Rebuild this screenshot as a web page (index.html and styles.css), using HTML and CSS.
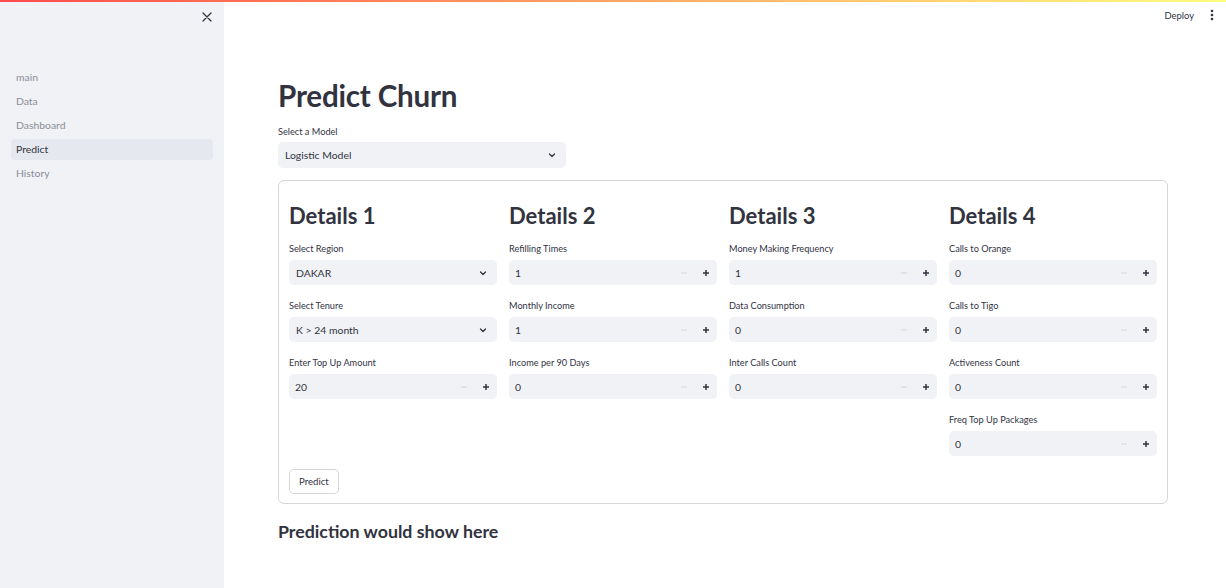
FILE: index.html
```html
<!DOCTYPE html>
<html lang="en">
<head>
<meta charset="utf-8">
<title>Predict Churn</title>
<link rel="stylesheet" href="styles.css">
</head>
<body>
<div class="decoration"></div>
<div class="app">
  <aside class="sidebar">
    <div class="sidebar-head">
      <svg class="close" width="10" height="10" viewBox="0 0 10 10"><path d="M1 1L9 9M9 1L1 9" stroke="#31333f" stroke-width="1.3" stroke-linecap="round"/></svg>
    </div>
    <nav class="nav">
      <a class="nav-item">main</a>
      <a class="nav-item">Data</a>
      <a class="nav-item">Dashboard</a>
      <a class="nav-item active">Predict</a>
      <a class="nav-item">History</a>
    </nav>
  </aside>
  <main class="main">
    <header class="topbar">
      <span class="deploy">Deploy</span>
      <svg class="kebab" width="4" height="12" viewBox="0 0 4 12"><circle cx="2" cy="2" r="1.3" fill="#31333f"/><circle cx="2" cy="6" r="1.3" fill="#31333f"/><circle cx="2" cy="10" r="1.3" fill="#31333f"/></svg>
    </header>
    <section class="content">
      <h1 class="title">Predict Churn</h1>
      <div class="field model-field">
        <label class="label">Select a Model</label>
        <div class="select"><span>Logistic Model</span><svg class="chev" width="10" height="10" viewBox="0 0 10 10"><path d="M2.5 4L5 6.5L7.5 4" fill="none" stroke="#31333f" stroke-width="1.3" stroke-linecap="round" stroke-linejoin="round"/></svg></div>
      </div>
      <form class="form">
        <div class="cols">
          <div class="col">
            <h2 class="h2">Details 1</h2>
            <div class="field"><label class="label">Select Region</label>
              <div class="select"><span>DAKAR</span><svg class="chev" width="10" height="10" viewBox="0 0 10 10"><path d="M2.5 4L5 6.5L7.5 4" fill="none" stroke="#31333f" stroke-width="1.3" stroke-linecap="round" stroke-linejoin="round"/></svg></div></div>
            <div class="field"><label class="label">Select Tenure</label>
              <div class="select"><span>K &gt; 24 month</span><svg class="chev" width="10" height="10" viewBox="0 0 10 10"><path d="M2.5 4L5 6.5L7.5 4" fill="none" stroke="#31333f" stroke-width="1.3" stroke-linecap="round" stroke-linejoin="round"/></svg></div></div>
            <div class="field"><label class="label">Enter Top Up Amount</label>
              <div class="num"><span class="val">20</span><span class="step minus"><svg width="8" height="8" viewBox="0 0 8 8"><path d="M1 4H7" stroke="#d5d7dc" stroke-width="1"/></svg></span><span class="step plus"><svg width="8" height="8" viewBox="0 0 8 8"><path d="M1 4H7M4 1V7" stroke="#31333f" stroke-width="1.5"/></svg></span></div></div>
          </div>
          <div class="col">
            <h2 class="h2">Details 2</h2>
            <div class="field"><label class="label">Refilling Times</label>
              <div class="num"><span class="val">1</span><span class="step minus"><svg width="8" height="8" viewBox="0 0 8 8"><path d="M1 4H7" stroke="#d5d7dc" stroke-width="1"/></svg></span><span class="step plus"><svg width="8" height="8" viewBox="0 0 8 8"><path d="M1 4H7M4 1V7" stroke="#31333f" stroke-width="1.5"/></svg></span></div></div>
            <div class="field"><label class="label">Monthly Income</label>
              <div class="num"><span class="val">1</span><span class="step minus"><svg width="8" height="8" viewBox="0 0 8 8"><path d="M1 4H7" stroke="#d5d7dc" stroke-width="1"/></svg></span><span class="step plus"><svg width="8" height="8" viewBox="0 0 8 8"><path d="M1 4H7M4 1V7" stroke="#31333f" stroke-width="1.5"/></svg></span></div></div>
            <div class="field"><label class="label">Income per 90 Days</label>
              <div class="num"><span class="val">0</span><span class="step minus"><svg width="8" height="8" viewBox="0 0 8 8"><path d="M1 4H7" stroke="#d5d7dc" stroke-width="1"/></svg></span><span class="step plus"><svg width="8" height="8" viewBox="0 0 8 8"><path d="M1 4H7M4 1V7" stroke="#31333f" stroke-width="1.5"/></svg></span></div></div>
          </div>
          <div class="col">
            <h2 class="h2">Details 3</h2>
            <div class="field"><label class="label">Money Making Frequency</label>
              <div class="num"><span class="val">1</span><span class="step minus"><svg width="8" height="8" viewBox="0 0 8 8"><path d="M1 4H7" stroke="#d5d7dc" stroke-width="1"/></svg></span><span class="step plus"><svg width="8" height="8" viewBox="0 0 8 8"><path d="M1 4H7M4 1V7" stroke="#31333f" stroke-width="1.5"/></svg></span></div></div>
            <div class="field"><label class="label">Data Consumption</label>
              <div class="num"><span class="val">0</span><span class="step minus"><svg width="8" height="8" viewBox="0 0 8 8"><path d="M1 4H7" stroke="#d5d7dc" stroke-width="1"/></svg></span><span class="step plus"><svg width="8" height="8" viewBox="0 0 8 8"><path d="M1 4H7M4 1V7" stroke="#31333f" stroke-width="1.5"/></svg></span></div></div>
            <div class="field"><label class="label">Inter Calls Count</label>
              <div class="num"><span class="val">0</span><span class="step minus"><svg width="8" height="8" viewBox="0 0 8 8"><path d="M1 4H7" stroke="#d5d7dc" stroke-width="1"/></svg></span><span class="step plus"><svg width="8" height="8" viewBox="0 0 8 8"><path d="M1 4H7M4 1V7" stroke="#31333f" stroke-width="1.5"/></svg></span></div></div>
          </div>
          <div class="col">
            <h2 class="h2">Details 4</h2>
            <div class="field"><label class="label">Calls to Orange</label>
              <div class="num"><span class="val">0</span><span class="step minus"><svg width="8" height="8" viewBox="0 0 8 8"><path d="M1 4H7" stroke="#d5d7dc" stroke-width="1"/></svg></span><span class="step plus"><svg width="8" height="8" viewBox="0 0 8 8"><path d="M1 4H7M4 1V7" stroke="#31333f" stroke-width="1.5"/></svg></span></div></div>
            <div class="field"><label class="label">Calls to Tigo</label>
              <div class="num"><span class="val">0</span><span class="step minus"><svg width="8" height="8" viewBox="0 0 8 8"><path d="M1 4H7" stroke="#d5d7dc" stroke-width="1"/></svg></span><span class="step plus"><svg width="8" height="8" viewBox="0 0 8 8"><path d="M1 4H7M4 1V7" stroke="#31333f" stroke-width="1.5"/></svg></span></div></div>
            <div class="field"><label class="label">Activeness Count</label>
              <div class="num"><span class="val">0</span><span class="step minus"><svg width="8" height="8" viewBox="0 0 8 8"><path d="M1 4H7" stroke="#d5d7dc" stroke-width="1"/></svg></span><span class="step plus"><svg width="8" height="8" viewBox="0 0 8 8"><path d="M1 4H7M4 1V7" stroke="#31333f" stroke-width="1.5"/></svg></span></div></div>
            <div class="field"><label class="label">Freq Top Up Packages</label>
              <div class="num"><span class="val">0</span><span class="step minus"><svg width="8" height="8" viewBox="0 0 8 8"><path d="M1 4H7" stroke="#d5d7dc" stroke-width="1"/></svg></span><span class="step plus"><svg width="8" height="8" viewBox="0 0 8 8"><path d="M1 4H7M4 1V7" stroke="#31333f" stroke-width="1.5"/></svg></span></div></div>
          </div>
        </div>
        <button type="button" class="btn">Predict</button>
      </form>
      <h3 class="h3">Prediction would show here</h3>
    </section>
  </main>
</div>
</body>
</html>
```
FILE: styles.css
```css
* { box-sizing: border-box; }
html, body { margin: 0; padding: 0; height: 100%; }
body {
  font-family: Lato, "Source Sans Pro", "Noto Sans", sans-serif;
  color: #31333f;
  background: #fff;
  overflow: hidden;
}
.decoration {
  position: fixed;
  top: 0; left: 0; right: 0;
  height: 2px;
  background: linear-gradient(90deg, #ff4b4b, #fffd80);
  z-index: 10;
}
.app { display: flex; height: 588px; }
.sidebar {
  width: 224px;
  flex: none;
  background: #f0f2f6;
  padding: 6px 11px;
}
.sidebar-head { height: 22px; display: flex; justify-content: flex-end; align-items: center; padding-right: 1px; }
.nav { margin-top: 39px; display: flex; flex-direction: column; gap: 3px; }
.nav-item {
  height: 21px;
  line-height: 21px;
  padding-left: 5px;
  font-size: 10.4px;
  color: #8b8d97;
  border-radius: 4px;
}
.nav-item.active { background: #e5e8ee; color: #31333f; }
.main { flex: 1; display: flex; flex-direction: column; min-width: 0; }
.topbar {
  height: 30px;
  display: flex;
  justify-content: flex-end;
  align-items: center;
  gap: 16px;
  padding-right: 12px;
}
.deploy { font-size: 9.4px; color: #31333f; }
.content { padding: 0 58px 0 54px; }
.title {
  margin: 49px 0 0;
  font-size: 29.6px;
  line-height: 34px;
  font-weight: 700;
  letter-spacing: -0.2px;
}
.model-field { margin-top: 11px; width: 288px; }
.field { display: flex; flex-direction: column; gap: 4px; }
.model-field.field { gap: 3px; }
.label { font-size: 9.2px; line-height: 15px; height: 15px; }
.select, .num {
  height: 25px;
  background: #f0f2f6;
  border-radius: 5px;
  display: flex;
  align-items: center;
  font-size: 10.4px;
}
.select { padding: 0 9px 0 7px; justify-content: space-between; }
.model-field .select { height: 26px; }
.num { padding-left: 6px; }
.num .val { flex: 1; }
.step { width: 22px; height: 100%; display: flex; align-items: center; justify-content: center; }
.form {
  margin-top: 12px;
  border: 1px solid rgba(49, 51, 63, 0.2);
  border-radius: 6px;
  padding: 11px 10px 9px 10px;
}
.cols { display: grid; grid-template-columns: repeat(4, 1fr); gap: 12px; align-items: start; }
.col { display: flex; flex-direction: column; gap: 13px; }
.h2 {
  margin: 0 0 -3px;
  padding-top: 9px;
  font-size: 22px;
  line-height: 30px;
  font-weight: 700;
}
.btn {
  margin-top: 13px;
  height: 25px;
  padding: 0 9px;
  background: #fff;
  border: 1px solid rgba(49, 51, 63, 0.2);
  border-radius: 5px;
  font-family: inherit;
  font-size: 9.6px;
  color: #31333f;
}
.h3 {
  margin: 15px 0 0;
  font-size: 17.8px;
  line-height: 24px;
  font-weight: 700;
}
```
